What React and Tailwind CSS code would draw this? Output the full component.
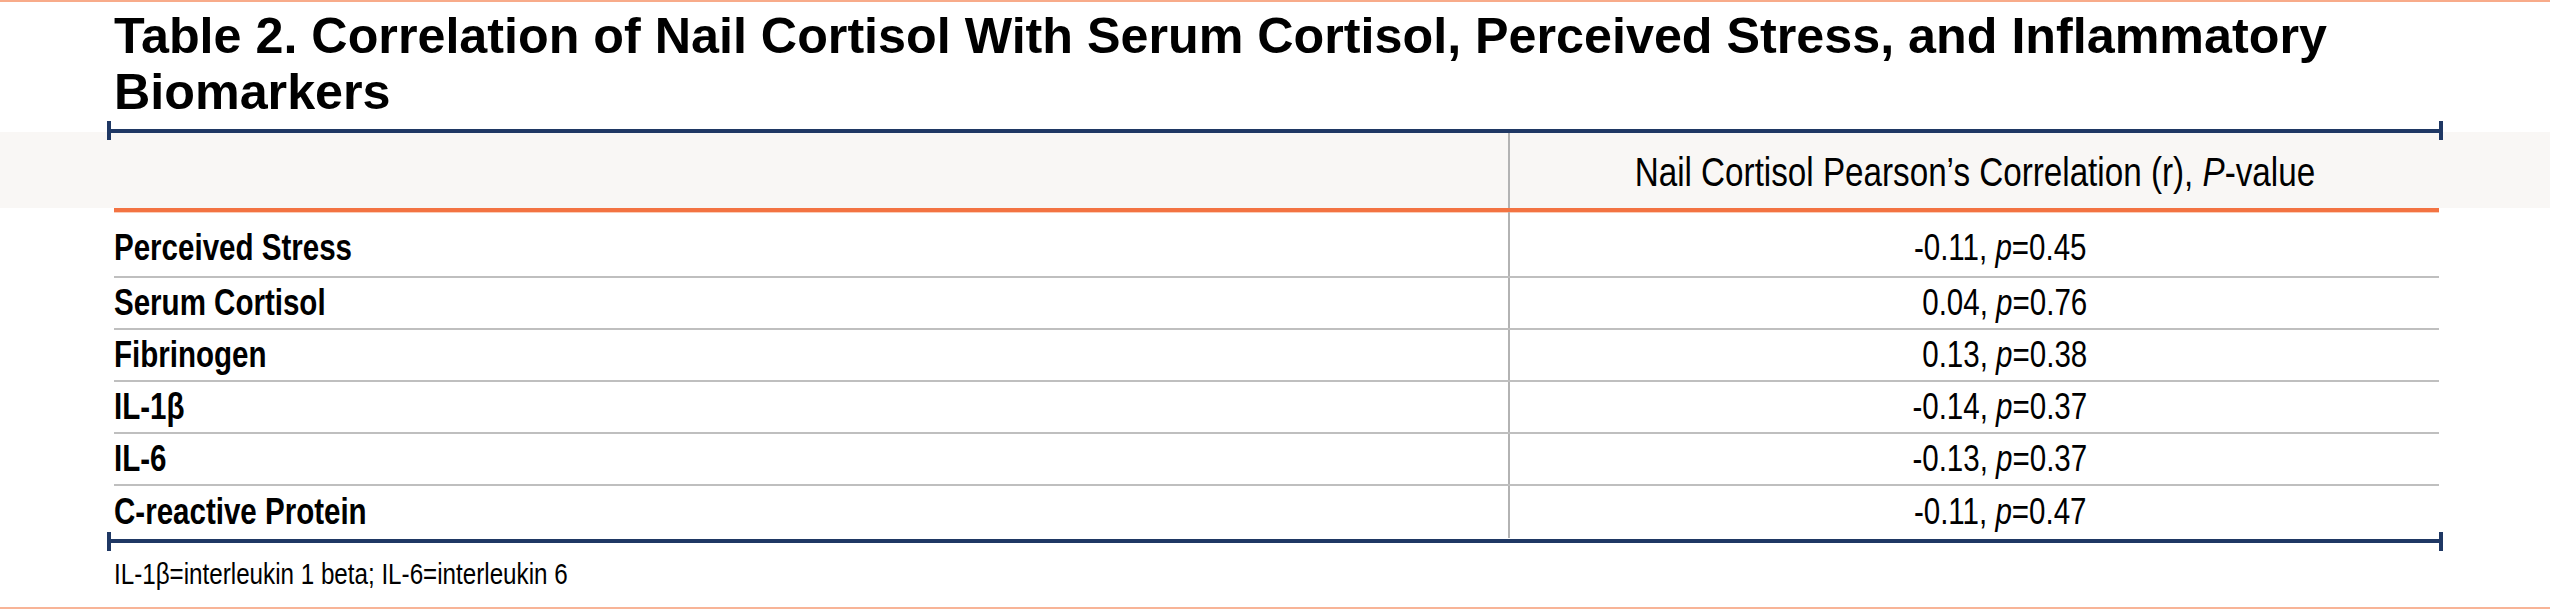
const rows = [
  { label: "Perceived Stress", r: "-0.11", p: "0.45" },
  { label: "Serum Cortisol", r: "0.04", p: "0.76" },
  { label: "Fibrinogen", r: "0.13", p: "0.38" },
  { label: "IL-1β", r: "-0.14", p: "0.37" },
  { label: "IL-6", r: "-0.13", p: "0.37" },
  { label: "C-reactive Protein", r: "-0.11", p: "0.47" },
];

// no narrow face installed, so squeeze Arial-metric text horizontally
const arial = "font-['Liberation_Sans',Arial,sans-serif]";
const narrow = "inline-block whitespace-nowrap scale-x-[0.82]";

function Rule({ className }) {
  return (
    <div className={"relative z-10 ml-[107px] flex w-[2336px] items-center " + className}>
      <div className="h-[19px] w-[4px] bg-[#1f3864]" />
      <div className="h-[4px] flex-1 bg-[#1f3864]" />
      <div className="h-[19px] w-[4px] bg-[#1f3864]" />
    </div>
  );
}

export default function App() {
  return (
    <div className={"flex h-[609px] w-[2550px] flex-col overflow-hidden bg-white text-black " + arial}>
      <div className="h-[2px] bg-[#f8ab8a]" />

      {/* title */}
      <h1 className="pl-[114px] pr-[100px] pt-[6px] text-[50.25px] font-bold leading-[56px]">
        Table 2. Correlation of Nail Cortisol With Serum Cortisol, Perceived Stress, and Inflammatory Biomarkers
      </h1>

      <Rule className="mt-[1px] h-[19px]" />

      {/* header strip */}
      <div className="-mt-[8px] flex h-[76px] bg-[#f9f7f5] pl-[114px]">
        <div className="w-[1394px]" />
        <div className="mt-[1px] w-[2px] bg-[#b3b3b3]" />
        <div className="flex w-[929px] items-center justify-center pt-[4px] text-[40.5px] leading-[40px]">
          <span className={narrow + " origin-center"}>
            Nail Cortisol Pearson’s Correlation (r), <i>P</i>-value
          </span>
        </div>
      </div>
      <div className="ml-[114px] h-[4px] w-[2325px] bg-[#f37342]" />
      <div className="ml-[114px] h-[1px] w-[2325px] bg-[#fbcdb8]" />

      {/* body */}
      <div className="-mt-[1px] ml-[114px] w-[2325px]">
        {rows.map((row, i) => (
          <div
            key={row.label}
            className={
              "flex text-[36px] leading-[36px] " +
              (i < rows.length - 1 ? "border-b-2 border-[#bfbfbf] " : "") +
              (i === 0 ? "h-[66px]" : "h-[52px]")
            }
          >
            <div className={"flex w-[1394px] items-center " + (i === 0 ? "pt-[8px]" : "")}>
              <span className={narrow + " origin-left font-bold"}>{row.label}</span>
            </div>
            <div className="w-[2px] bg-[#b3b3b3]" />
            <div
              className={
                "flex w-[929px] items-center justify-end pr-[352px] " + (i === 0 ? "pt-[8px]" : "")
              }
            >
              <span className={narrow + " origin-right"}>
                {row.r}, <i>p</i>={row.p}
              </span>
            </div>
          </div>
        ))}
      </div>

      <Rule className="-mt-[5px] h-[16px]" />

      <p className="ml-[114px] mt-[10px] text-[29.5px] leading-[29px]">
        <span className={narrow + " origin-left"}>IL-1β=interleukin 1 beta; IL-6=interleukin 6</span>
      </p>

      <div className="flex-1" />
      <div className="h-[2px] bg-[#f8b497]" />
    </div>
  );
}
